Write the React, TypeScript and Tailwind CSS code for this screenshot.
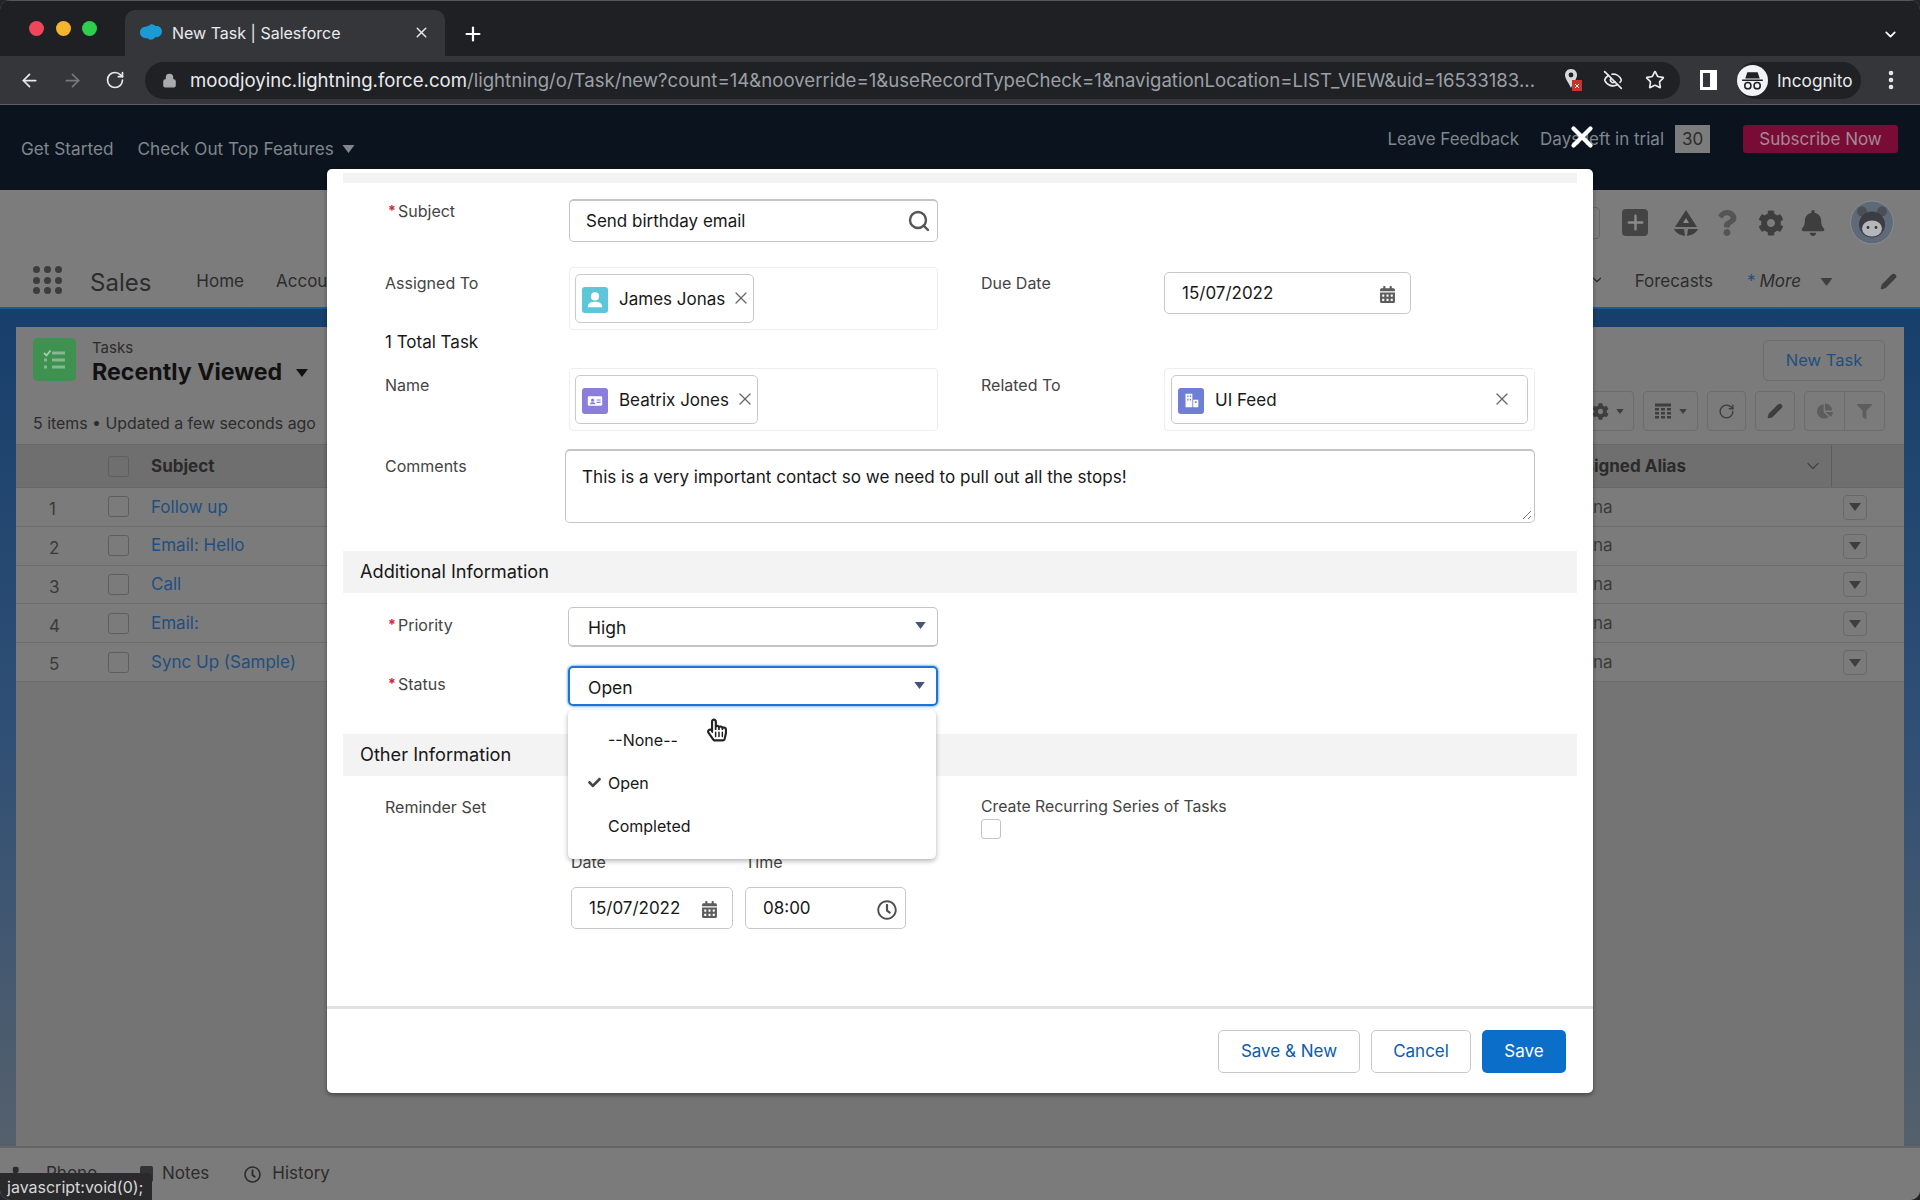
import type { ReactNode } from 'react'
import { ArrowLeft, ArrowRight, ChevronDown, EyeOff, Lock, MoreVertical, Pencil, Phone, Plus, RotateCw, Search, Star, X } from 'lucide-react'
import { FaBell, FaCalendarAlt, FaChartPie, FaCheck, FaCog, FaFilter, FaRegClock, FaRegHandPointer, FaQuestion } from 'react-icons/fa'

const tasks = ['Follow up', 'Email: Hello', 'Call', 'Email:', 'Sync Up (Sample)']

function Caret({ className }: { className: string }) {
  return (
    <svg viewBox="0 0 12 8" className={className} fill="currentColor">
      <path d="M0 0h12L6 8z" />
    </svg>
  )
}

function Chrome() {
  return (
    <div className="shrink-0">
      <div className="flex h-[56px] items-end border-t border-[#55565a] bg-[#1f2023]">
        <div className="flex h-[56px] w-[125px] items-center gap-[11.5px] pl-[29px]">
          <span className="h-[15px] w-[15px] rounded-full bg-[#f0455a]" />
          <span className="h-[15px] w-[15px] rounded-full bg-[#f5b52e]" />
          <span className="h-[15px] w-[15px] rounded-full bg-[#2fce4c]" />
        </div>
        <div className="flex h-[46px] w-[320px] items-center rounded-t-[10px] bg-[#35363a] pb-[1px] pl-[15px] pr-[15px] text-[16px] text-[#e8eaed]">
          <svg viewBox="0 0 24 18" className="mr-[10px] h-[17px] w-[22px]" fill="#1b9ad6">
            <path d="M9 2c3-3 6-2 8 0 4-1 7 2 7 6s-4 7-7 6c-2 3-7 4-9 1-4 1-8-2-8-6s3-6 5-6c1 0 3-1 4-1z" />
          </svg>
          <span className="flex-1">New Task | Salesforce</span>
          <X size={17} strokeWidth={2} />
        </div>
        <div className="flex h-[44px] w-[56px] items-center justify-center text-white">
          <Plus size={22} strokeWidth={2.4} />
        </div>
        <div className="ml-auto flex h-[44px] w-[60px] items-center justify-center text-white">
          <ChevronDown size={17} strokeWidth={2.4} />
        </div>
      </div>
      <div className="flex h-[49px] items-center border-b border-[#5c5d61] bg-[#35363a] text-[#e8eaed]">
        <div className="flex w-[145px] items-center pl-[19px]">
          <ArrowLeft size={21} />
          <ArrowRight size={21} className="ml-[22px] text-[#77787b]" />
          <RotateCw size={20} className="ml-[22px]" />
        </div>
        <div className="flex h-[37px] w-[1535px] items-center rounded-full bg-[#202124] pl-[17px]">
          <Lock size={15} className="text-[#a9abae]" fill="#a9abae" />
          <div className="ml-[13px] mt-[1px] w-[1349px] truncate text-[18.6px]">
            moodjoyinc.lightning.force.com
            <span className="text-[#9aa0a6]">/lightning/o/Task/new?count=14&amp;nooverride=1&amp;useRecordTypeCheck=1&amp;navigationLocation=LIST_VIEW&amp;uid=16533183...</span>
          </div>
          <svg viewBox="0 0 18 24" className="ml-[25px] h-[24px] w-[18px]">
            <path d="M7 1C3 1 1 4 1 7c0 4 4 8 6 13 2-5 6-9 6-13 0-3-2-6-6-6z" fill="#d8d9db" />
            <circle cx="7" cy="7" r="2.400" fill="#202124" />
            <rect x="8" y="12" width="10" height="11" fill="#c5352b" />
            <path d="M11 16l4 4M15 16l-4 4" stroke="#fff" strokeWidth="1" />
          </svg>
          <EyeOff size={20} className="ml-[21px]" />
          <Star size={20} className="ml-[22px]" />
        </div>
        <span className="ml-[20px] h-[20px] w-[17px] border-[3px] border-r-[7px] border-white bg-[#35363a]" />
        <div className="ml-[20px] flex h-[37px] w-[124px] items-center rounded-full bg-[#202124] text-[17.2px]">
          <svg viewBox="0 0 30 30" className="h-[31px] w-[31px]">
            <circle cx="15" cy="15" r="15" fill="#f1f3f4" />
            <path d="M10 7h10l2 6H8zM5 14h20v1.6H5z" fill="#202124" />
            <circle cx="10.5" cy="20" r="3" fill="none" stroke="#202124" strokeWidth="1.5" />
            <circle cx="19.5" cy="20" r="3" fill="none" stroke="#202124" strokeWidth="1.5" />
          </svg>
          <span className="ml-[9px] mt-[1px]">Incognito</span>
        </div>
        <MoreVertical size={24} strokeWidth={2.6} className="ml-[18px]" />
      </div>
    </div>
  )
}

function Banner() {
  return (
    <div className="flex h-[85px] shrink-0 items-start bg-[#0b141e] text-[17.2px] text-[#80868d]">
      <span className="ml-[21px] mt-[31px]">Get Started</span>
      <span className="ml-[24px] mt-[31px]">Check Out Top Features</span>
      <Caret className="ml-[8px] mt-[40px] h-[8px] w-[13px]" />
      <div className="ml-auto mt-[20px] flex h-[28px] items-center pr-[22px] text-[17px]">
        <span className="mt-[2px]">Leave Feedback</span>
        <span className="ml-[21px] mt-[2px]">Days left in trial</span>
        <span className="ml-[11px] flex h-[28px] w-[35px] items-center justify-center bg-[#7c7c7c] pt-[1px] text-[#2b2b2b]">30</span>
        <span className="ml-[33px] flex h-[28px] w-[155px] items-center justify-center rounded-[3px] bg-[#780c35] pt-[1px] text-[#a58894]">Subscribe Now</span>
      </div>
    </div>
  )
}

function SfHeader() {
  return (
    <div className="h-[117px] shrink-0 bg-[#7d7c7c] text-[#2c2c2c]">
      <div className="flex h-[65px] items-center justify-end pr-[26px] text-[#3f3e3e]">
        <span className="h-[32px] w-[200px] rounded-[4px] border border-[#666]" />
        <span className="ml-[22px] flex h-[27px] w-[26px] items-center justify-center rounded-[4px] bg-[#444] text-[#8b8a8a]">
          <Plus size={23} strokeWidth={2.5} />
        </span>
        <svg viewBox="0 0 28 28" className="ml-[24px] h-[28px] w-[28px]" fill="currentColor">
          <path d="M14 1l11 17H3z" />
          <path d="M2 20h10l1 7C8 26 4 24 2 20zM26 20H16l-1 7c5-1 9-3 11-7z" />
          <path d="M14 9l3 5h-6z" fill="#8b8a8a" />
        </svg>
        <FaQuestion className="ml-[15px] h-[26px] w-[24px] text-[#555]" />
        <FaCog className="ml-[19px] h-[26px] w-[26px]" />
        <FaBell className="ml-[16px] h-[26px] w-[26px]" />
        <svg viewBox="0 0 44 44" className="ml-[24px] h-[45px] w-[44px]">
          <circle cx="22" cy="22" r="21.5" fill="#5f6a78" stroke="#8a8d92" />
          <circle cx="12" cy="11" r="5" fill="#4a4e56" />
          <circle cx="32" cy="11" r="5" fill="#4a4e56" />
          <circle cx="22" cy="24" r="13" fill="#3b3d42" />
          <ellipse cx="22" cy="28" rx="10" ry="8" fill="#b4b6ba" />
          <circle cx="18" cy="27" r="1.4" fill="#333" />
          <circle cx="26" cy="27" r="1.4" fill="#333" />
        </svg>
      </div>
      <div className="flex h-[52px] items-center pb-[2px] text-[17px]">
        <div className="ml-[33px] grid w-[29px] grid-cols-3 gap-[3.5px]">
          {Array.from({ length: 9 }).map((_, i) => (
            <span key={i} className="h-[7px] w-[7px] rounded-full bg-[#3d3c3c]" />
          ))}
        </div>
        <span className="ml-[28px] mt-[5px] text-[24px]">Sales</span>
        <span className="ml-[45px] mt-[3px]">Home</span>
        <span className="ml-[32px] mt-[3px]">Accounts</span>
        <ChevronDown size={14} className="ml-auto" />
        <span className="ml-[31px] mt-[4px]">Forecasts</span>
        <span className="ml-[34px] mt-[3px] text-[#1f4f80]">*</span>
        <span className="ml-[4px] mt-[3px] italic">More</span>
        <Caret className="ml-[19px] mt-[3px] h-[8px] w-[13px] text-[#3f3e3e]" />
        <Pencil size={17} fill="#3f3e3e" className="ml-[47px] mr-[23px] mt-[3px] text-[#3f3e3e]" />
      </div>
    </div>
  )
}

function ToolBtn({ children, className }: { children: ReactNode; className: string }) {
  return <div className={`flex h-[40px] items-center justify-center rounded-[4px] border border-[#6d6c6c] text-[#3f3e3e] ${className}`}>{children}</div>
}

function TaskList() {
  return (
    <div className="flex min-h-0 flex-1 flex-col border-t-2 border-[#1c5a9e] bg-[linear-gradient(180deg,#173f6b_0%,#2f4f75_50%,#55606c_100%)] px-[16px] pt-[18px]">
      <div className="flex flex-1 flex-col bg-[#757474] text-[#2c2c2c]">
        <div className="flex h-[117px] shrink-0 justify-between bg-[#7c7b7b] pr-[19px] pt-[11px]">
          <div className="pl-[17px]">
            <div className="flex">
              <svg viewBox="0 0 43 43" className="h-[43px] w-[43px]">
                <rect width="43" height="43" rx="5" fill="#3f9150" />
                <path d="M11 15l2.500 2.500 4-5" fill="none" stroke="#a9cdb1" strokeWidth="1.800" />
                <path d="M19 15h13M19 22h13M19 29h13M11 22h3M11 29h3" stroke="#86b892" strokeWidth="3" />
              </svg>
              <div className="ml-[16px]">
                <div className="text-[15px] leading-[20px]">Tasks</div>
                <div className="flex items-center text-[23.2px] font-bold leading-[28px] text-[#111]">
                  Recently Viewed
                  <Caret className="ml-[13px] mt-[2px] h-[8px] w-[14px]" />
                </div>
              </div>
            </div>
            <div className="mt-[26px] text-[15.9px]">5 items • Updated a few seconds ago</div>
          </div>
          <div className="flex flex-col items-end pt-[2px]">
            <div className="flex h-[41px] w-[122px] items-center justify-center rounded-[5px] border border-[#6d6c6c] text-[16.5px] text-[#1f4f80]">New Task</div>
            <div className="mt-[10px] flex gap-[9px]">
              <ToolBtn className="w-[70px] justify-end gap-[7px] pr-[9px]"><FaCog size={17} /><Caret className="h-[5px] w-[8px]" /></ToolBtn>
              <ToolBtn className="w-[55px] gap-[7px]">
                <svg viewBox="0 0 18 18" className="h-[19px] w-[18px]" fill="#3f3e3e">
                  <path d="M1 1h16v3H1zM1 5.500h4v2.500H1zM7 5.500h4v2.500H7zM13 5.500h4v2.500h-4zM1 9.500h4V12H1zM7 9.500h4V12H7zM13 9.500h4V12h-4zM1 13.500h4V16H1zM7 13.500h4V16H7zM13 13.500h4V16h-4z" />
                </svg>
                <Caret className="h-[5px] w-[8px]" />
              </ToolBtn>
              <ToolBtn className="w-[39px]"><RotateCw size={17} /></ToolBtn>
              <ToolBtn className="w-[40px]"><Pencil size={16} fill="#3f3e3e" /></ToolBtn>
              <div className="flex h-[40px] w-[81px] rounded-[4px] border border-[#6d6c6c] text-[#5e5d5d]">
                <span className="flex flex-1 items-center justify-center border-r border-[#6d6c6c]"><FaChartPie size={16} /></span>
                <span className="flex flex-1 items-center justify-center"><FaFilter size={15} /></span>
              </div>
            </div>
          </div>
        </div>
        <div className="flex h-[44px] shrink-0 items-center border-y border-[#696868] bg-[#706f6f] font-bold">
          <span className="ml-[92px] h-[21px] w-[21px] rounded-[3px] border border-[#5f5e5e]" />
          <span className="ml-[22px] mt-[1px] text-[17px] text-[#2a2a2a]">Subject</span>
          <span className="ml-auto mt-[1px] text-[17px] text-[#2a2a2a]">Assigned Alias</span>
          <ChevronDown size={20} strokeWidth={1.6} className="ml-[117px] text-[#444]" />
          <span className="ml-[8px] mr-[72px] h-full w-px bg-[#5e5d5d]" />
        </div>
        {tasks.map((t, i) => (
          <div key={t} className="flex h-[38.8px] shrink-0 items-center border-b border-[#6e6d6d] bg-[#7c7b7b] text-[17px]">
            <span className="ml-[33px] mt-[6px] w-[59px] text-[#3a3a3a]">{i + 1}</span>
            <span className="h-[21px] w-[21px] rounded-[3px] border border-[#5f5e5e]" />
            <span className="ml-[22px] mt-[1px] text-[#1f4f80]">{t}</span>
            <span className="ml-auto mt-[1px] w-[250px] text-[#3a3a3a]">na</span>
            <span className="mr-[37px] mt-[1px] flex h-[25px] w-[24px] items-center justify-center rounded-[4px] border border-[#6a6969]">
              <Caret className="h-[8px] w-[12px] text-[#3f3e3e]" />
            </span>
          </div>
        ))}
      </div>
    </div>
  )
}

function BottomBar() {
  return (
    <div className="flex h-[54px] shrink-0 items-center border-t-2 border-[#666565] bg-[#7c7b7b] text-[17px] text-[#2c2c2c]">
      <Phone size={16} fill="#2c2c2c" className="ml-[12px]" />
      <span className="ml-[18px]">Phone</span>
      <span className="ml-[43px] h-[16px] w-[13px] rounded-[2px] bg-[#333]" />
      <span className="ml-[9px]">Notes</span>
      <FaRegClock className="ml-[35px] h-[17px] w-[17px]" />
      <span className="ml-[11px]">History</span>
    </div>
  )
}

function Label({ children, required }: { children: ReactNode; required?: boolean }) {
  return (
    <div className="flex w-[184px] shrink-0 text-[16px] text-[#444]">
      {required && <span className="ml-[3px] mt-[1px] w-[10px] text-[14px] font-bold text-[#d0243c]">*</span>}
      {children}
    </div>
  )
}

function Pill({ name, color, icon, wide }: { name: string; color: string; icon: ReactNode; wide?: boolean }) {
  return (
    <div className={`flex h-[49px] items-center rounded-[5px] border border-[#c9c9c9] pl-[6px] ${wide ? 'ml-[1px] w-[357px]' : ''}`}>
      <span className={`mt-[2px] flex h-[26px] w-[26px] items-center justify-center rounded-[3px] ${color}`}>{icon}</span>
      <span className="ml-[11px] mt-[3px] text-[17px] text-[#181818]">{name}</span>
      <X size={20} strokeWidth={1.5} className={`${wide ? 'ml-auto mr-[15px]' : 'ml-[6px] mr-[2px]'} -mt-[2px] text-[#666]`} />
    </div>
  )
}

function LookupBox({ children, width }: { children: ReactNode; width: string }) {
  return <div className={`flex h-[63px] items-center rounded-[4px] border border-[#eeeeee] pl-[5px] ${width}`}>{children}</div>
}

function DateInput({ value, width, icon }: { value: string; width: string; icon: ReactNode }) {
  return (
    <div className={`flex h-[42px] items-center justify-between rounded-[5px] border border-[#c9c9c9] pl-[17px] pr-[11px] text-[17px] text-[#181818] ${width}`}>
      <span className="mt-[1px]">{value}</span>
      {icon}
    </div>
  )
}

function Select({ value, focus }: { value: string; focus?: boolean }) {
  return (
    <div className={`flex h-[40px] w-[370px] items-center justify-between rounded-[5px] pr-[11px] text-[17.5px] text-[#181818] ${focus ? 'border-2 border-[#1b74d6] pl-[18px] shadow-[0_0_3px_#1b74d6]' : 'border border-b-2 border-[#c4c4c4] pl-[19px]'}`}>
      <span className="mt-[4px]">{value}</span>
      <Caret className="mb-[2px] h-[7px] w-[11px] text-[#47537a]" />
    </div>
  )
}

function SectionHead({ title, className }: { title: string; className: string }) {
  return <div className={`flex h-[42px] items-center bg-[#f3f3f3] pl-[17px] text-[18.2px] text-[#181818] ${className}`}>{title}</div>
}

function TaskModal() {
  const calendar = <FaCalendarAlt className="mr-[4px] mt-[3px] h-[17px] w-[15px] text-[#5c5c5c]" />
  return (
    <div className="absolute left-[327px] top-[169px] flex h-[924px] w-[1266px] flex-col rounded-[5px] bg-white shadow-[0_2px_4px_rgba(0,0,0,0.4)]">
      <div className="relative flex flex-1 flex-col px-[16px]">
        <div className="mt-[4px] h-[10px] shrink-0 bg-[#f3f3f3]" />

        <div className="mt-[16px] flex pl-[42px]">
          <Label required><span>Subject</span></Label>
          <div className="flex h-[43px] w-[369px] items-center justify-between rounded-[5px] border border-t-2 border-[#c4c4c4] pl-[16px] pr-[6px] text-[17px] text-[#181818]">
            <span className="mt-[1px]">Send birthday email</span>
            <Search size={24} strokeWidth={2.4} className="text-[#555]" />
          </div>
        </div>

        <div className="mt-[25px] flex pl-[42px]">
          <div className="pt-[4px]"><Label>Assigned To</Label></div>
          <LookupBox width="w-[369px]">
            <Pill
              name="James Jonas"
              color="bg-[#5dc6d8]"
              icon={
                <svg viewBox="0 0 20 20" className="h-[18px] w-[18px]" fill="white">
                  <circle cx="10" cy="6" r="4.5" />
                  <path d="M2 18c0-5 4-6 8-6s8 1 8 6z" />
                </svg>
              }
            />
          </LookupBox>
          <div className="ml-[43px] flex">
            <div className="-mr-[1px] pt-[4px]"><Label>Due Date</Label></div>
            <div className="mt-[5px]"><DateInput value="15/07/2022" width="w-[247px]" icon={calendar} /></div>
          </div>
        </div>

        <div className="mt-[1px] h-[37px] pl-[42px] text-[17px] leading-[22px] text-[#181818]">1 Total Task</div>

        <div className="flex pl-[42px]">
          <div className="pt-[5px]"><Label>Name</Label></div>
          <LookupBox width="w-[369px]">
            <Pill
              name="Beatrix Jones"
              color="bg-[#8b7ddb]"
              icon={
                <svg viewBox="0 0 20 20" className="h-[16px] w-[16px]" fill="white">
                  <rect x="1" y="4" width="18" height="12" rx="1.5" />
                  <circle cx="7" cy="9" r="2" fill="#8b7ddb" />
                  <path d="M3.5 14c0-2 2-2.5 3.5-2.5s3.500.5 3.500 2.500zM12 8h5v1.500h-5zM12 11h5v1.500h-5z" fill="#8b7ddb" />
                </svg>
              }
            />
          </LookupBox>
          <div className="ml-[43px] flex">
            <div className="-mr-[1px] pt-[5px]"><Label>Related To</Label></div>
            <LookupBox width="w-[371px]">
              <Pill
                name="UI Feed"
                wide
                color="bg-[#6f7fd8]"
                icon={
                  <svg viewBox="0 0 20 20" className="h-[17px] w-[17px]" fill="white">
                    <path d="M3 2h8v16H3zM12 9h6v9h-6z" />
                    <path d="M5 4h1.500v2H5zM8 4h1.500v2H8zM5 8h1.500v2H5zM8 8h1.500v2H8zM14 11h2v2h-2z" fill="#6f7fd8" />
                  </svg>
                }
              />
            </LookupBox>
          </div>
        </div>

        <div className="mt-[18px] flex pl-[42px]">
          <div className="-mr-[4px] pt-[5px]"><Label>Comments</Label></div>
          <div className="relative h-[74px] w-[970px] rounded-[5px] border border-t-2 border-[#c4c4c4] pl-[16px] pt-[15px] text-[17.1px] leading-[22px] text-[#181818]">
            This is a very important contact so we need to pull out all the stops!
            <svg viewBox="0 0 10 10" className="absolute bottom-[2px] right-[2px] h-[10px] w-[10px]" stroke="#777" fill="none">
              <path d="M1 9l8-8M6 9l3-3" />
            </svg>
          </div>
        </div>

        <SectionHead title="Additional Information" className="mt-[28px] shrink-0" />

        <div className="mt-[14px] flex pl-[42px]">
          <div className="w-[183px] pt-[6px]"><Label required><span>Priority</span></Label></div>
          <Select value="High" />
        </div>
        <div className="mt-[19px] flex pl-[42px]">
          <div className="w-[183px] pt-[6px]"><Label required><span>Status</span></Label></div>
          <Select value="Open" focus />
        </div>

        <SectionHead title="Other Information" className="mt-[28px] shrink-0" />

        <div className="mt-[20px] flex pl-[42px]">
          <div className="-mt-[1px] w-[187px]"><Label>Reminder Set</Label></div>
          <div className="flex-1" />
          <div className="mr-[296px] w-[300px] text-[15.8px] leading-[22px] text-[#444]">
            Create Recurring Series of Tasks
            <div className="mt-[1px] h-[20px] w-[20px] rounded-[3px] border border-[#c4c4c4]" />
          </div>
        </div>

        <div className="mt-[11px] flex pl-[228px] text-[16px] text-[#444]">
          <div className="w-[162px]">
            <div className="h-[37px]">Date</div>
            <DateInput value="15/07/2022" width="w-[162px]" icon={calendar} />
          </div>
          <div className="ml-[12px] w-[161px]">
            <div className="h-[37px]">Time</div>
            <DateInput value="08:00" width="w-[161px]" icon={<FaRegClock className="-mr-[3px] mt-[3px] h-[20px] w-[20px] text-[#4f4f4f]" />} />
          </div>
        </div>

        <div className="absolute left-[241px] top-[541px] flex h-[149px] w-[368px] flex-col justify-center rounded-[5px] bg-white pb-[3px] text-[16px] text-[#181818] shadow-[0_2px_5px_rgba(0,0,0,0.3)]">
          <div className="flex h-[42px] items-center pl-[40px]">--None--</div>
          <div className="flex h-[43px] items-center pl-[20px]">
            <FaCheck className="h-[13px] w-[13px] text-[#444]" />
            <span className="ml-[7px]">Open</span>
          </div>
          <div className="flex h-[43px] items-center pl-[40px]">Completed</div>
          <FaRegHandPointer className="absolute left-[139px] top-[8px] h-[24px] w-[20px] text-[#222]" />
        </div>
      </div>

      <div className="flex h-[87px] shrink-0 items-start justify-end gap-[11px] border-t-[3px] border-[#e2e2e2] pr-[27px] pt-[21px] text-[17px]">
        <button className="h-[43px] w-[142px] rounded-[5px] border border-[#c9c9c9] text-[#0b5cab]">Save &amp; New</button>
        <button className="h-[43px] w-[100px] rounded-[5px] border border-[#c9c9c9] text-[#0b5cab]">Cancel</button>
        <button className="h-[43px] w-[84px] rounded-[5px] bg-[#0b6fc9] text-white">Save</button>
      </div>
    </div>
  )
}

export default function App() {
  return (
    <div className="h-[1200px] w-[1920px] bg-[#26222c]">
      <div className="relative flex h-full w-full flex-col overflow-hidden rounded-[10px] bg-[#7c7b7b] font-[Inter,'Liberation_Sans',sans-serif]">
        <Chrome />
        <Banner />
        <SfHeader />
        <TaskList />
        <BottomBar />
        <TaskModal />
        <X size={34} strokeWidth={3} className="absolute left-[1565px] top-[120px] text-white" />
        <div className="absolute bottom-0 left-0 flex h-[27px] w-[152px] items-center rounded-tr-[4px] bg-[#2a2a2c] pl-[7px] text-[16px] text-[#d8d8d8]">javascript:void(0);</div>
      </div>
    </div>
  )
}
